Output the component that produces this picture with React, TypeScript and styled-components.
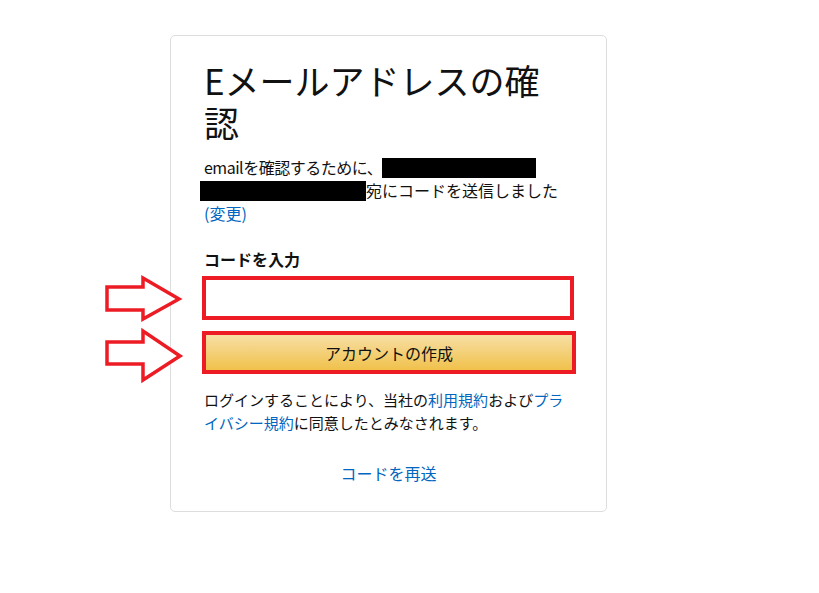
import React from "react";
import styled, { createGlobalStyle } from "styled-components";

const Global = createGlobalStyle`
  html, body { margin: 0; padding: 0; background: #fff; }
  body { font-family: "Noto Sans CJK JP", "Noto Sans", sans-serif; color: #111; }
`;

const Page = styled.div`
  position: relative;
  width: 819px;
  height: 593px;
  padding: 35px 0 0 170px;
  box-sizing: border-box;
`;

const Card = styled.div`
  width: 437px;
  box-sizing: border-box;
  border: 1px solid #ddd;
  border-radius: 5px;
  padding: 23px 33px 26px 33px;
  display: flex;
  flex-direction: column;
`;

const Heading = styled.h1`
  margin: 0;
  font-size: 35px;
  line-height: 42px;
  font-weight: 400;
  color: #111;
`;

const Para = styled.p`
  margin: 13px 0 0 0;
  font-size: 16px;
  line-height: 23px;
`;

const Lead = styled.span`
  letter-spacing: -0.5px;
`;

const Redact = styled.span<{ $w: number; $shift?: number }>`
  display: inline-block;
  width: ${(p) => p.$w}px;
  height: 20px;
  margin-left: ${(p) => p.$shift ?? 0}px;
  background: #000;
  vertical-align: -4px;
`;

const Link = styled.a`
  color: #0066c0;
  text-decoration: none;
  cursor: pointer;
`;

const Label = styled.label`
  margin-top: 23px;
  font-size: 16px;
  line-height: 23px;
  font-weight: 700;
`;

const Input = styled.input`
  margin-top: 5px;
  height: 44px;
  box-sizing: border-box;
  border: 4.5px solid #ed1c24;
  background: #fff;
  outline: none;
  width: 372px;
  margin-left: -2px;
`;

const Button = styled.button`
  margin-top: 11px;
  height: 43px;
  width: 374px;
  margin-left: -2px;
  box-sizing: border-box;
  border: 4.5px solid #ed1c24;
  background: linear-gradient(to bottom, #f7dfa5, #f0c14b);
  font-family: inherit;
  font-size: 16px;
  color: #111;
  padding: 0;
`;

const Legal = styled.p`
  margin: 14px 0 0 0;
  font-size: 15px;
  line-height: 23px;
`;

const Resend = styled.div`
  margin-top: 28px;
  text-align: center;
  font-size: 16px;
  line-height: 23px;
`;

const Arrow = styled.svg<{ $top: number }>`
  position: absolute;
  left: 104px;
  top: ${(p) => p.$top}px;
  overflow: visible;
`;

export default function App() {
  return (
    <>
      <Global />
      <Page>
        <Card>
          <Heading>
            Eメールアドレスの確
            <br />
            認
          </Heading>
          <Para>
            <Lead>emailを確認するために、</Lead>
            <Redact $w={154} />
            <br />
            <Redact $w={166} $shift={-4} />宛にコードを送信しました
            <br />
            <Link>(変更)</Link>
          </Para>
          <Label>コードを入力</Label>
          <Input type="text" />
          <Button>アカウントの作成</Button>
          <Legal>
            ログインすることにより、当社の<Link>利用規約</Link>および<Link>プライバシー規約</Link>に同意したとみなされます。
          </Legal>
          <Resend>
            <Link>コードを再送</Link>
          </Resend>
        </Card>
        <Arrow $top={275} width="80" height="48" viewBox="0 0 80 48">
          <polygon
            points="3,12 39,12 39,3 75,24 39,44 39,35 3,35"
            fill="#fff"
            stroke="#ed1c24"
            strokeWidth="3.5"
            strokeLinejoin="miter"
          />
        </Arrow>
        <Arrow $top={328} width="80" height="56" viewBox="0 0 80 56">
          <polygon
            points="3,14 39,14 39,3 76,28 39,52 39,36 3,36"
            fill="#fff"
            stroke="#ed1c24"
            strokeWidth="3.5"
            strokeLinejoin="miter"
          />
        </Arrow>
      </Page>
    </>
  );
}
